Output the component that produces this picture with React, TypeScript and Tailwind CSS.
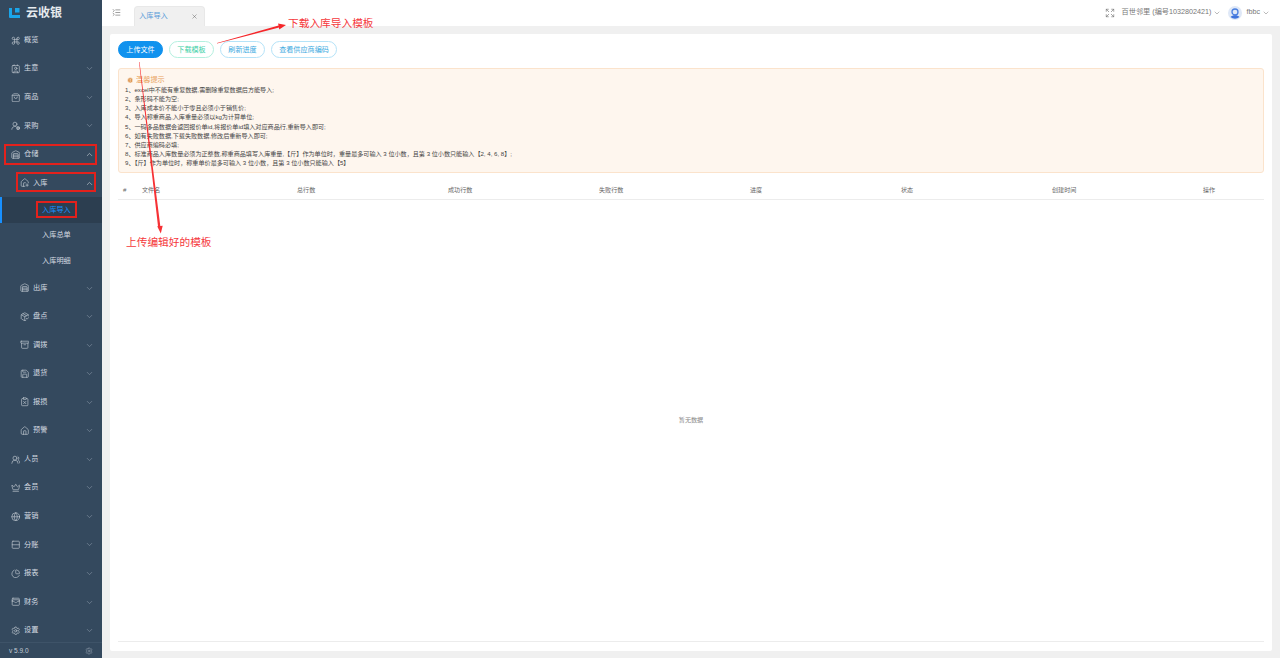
import React from "react";
import {
  ChevronDown,
  ChevronUp,
  Command,
  Contact,
  ShoppingBag,
  UserRoundCog,
  Warehouse,
  House,
  PackageCheck,
  Save,
  ClipboardX,
  HousePlus,
  UsersRound,
  Crown,
  Globe,
  Rows2,
  ChartPie,
  WalletCards,
  Settings,
  X,
  Expand,
  ListCollapse,
  CircleAlert,
  Archive,
} from "lucide-react";

type Item = { label: string; icon: React.ElementType; arrow?: boolean };

const topItems: Item[] = [
  { label: "概览", icon: Command },
  { label: "生意", icon: Contact, arrow: true },
  { label: "商品", icon: ShoppingBag, arrow: true },
  { label: "采购", icon: UserRoundCog, arrow: true },
];

const stockItems: Item[] = [
  { label: "出库", icon: Warehouse, arrow: true },
  { label: "盘点", icon: PackageCheck, arrow: true },
  { label: "调拨", icon: Archive, arrow: true },
  { label: "退货", icon: Save, arrow: true },
  { label: "报损", icon: ClipboardX, arrow: true },
  { label: "预警", icon: House, arrow: true },
];

const bottomItems: Item[] = [
  { label: "人员", icon: UsersRound, arrow: true },
  { label: "会员", icon: Crown, arrow: true },
  { label: "营销", icon: Globe, arrow: true },
  { label: "分账", icon: Rows2, arrow: true },
  { label: "报表", icon: ChartPie, arrow: true },
  { label: "财务", icon: WalletCards, arrow: true },
  { label: "设置", icon: Settings, arrow: true },
];

const tips = [
  "1、excel中不能有重复数据,需删除重复数据后方能导入;",
  "2、条形码不能为空;",
  "3、入库成本价不能小于零且必须小于销售价;",
  "4、导入称重商品,入库重量必须以kg为计算单位;",
  "5、一码多品数据会返回报价单id,将报价单id填入对应商品行,重新导入即可;",
  "6、如有失败数据,下载失败数据,修改后重新导入即可;",
  "7、供应商编码必填;",
  "8、标准商品入库数量必须为正整数,称重商品填写入库重量,【斤】作为单位时,重量最多可输入 3 位小数,且第 3 位小数只能输入【2, 4, 6, 8】;",
  "9、【斤】作为单位时,称重单价最多可输入 3 位小数,且第 3 位小数只能输入【5】",
].map((t) => t.replace("单位时,", "单位时，").replace("位小数,", "位小数，"));

const columns = ["#", "文件名", "总行数", "成功行数", "失败行数", "进度", "状态", "创建时间", "操作"];

function MenuRow({ item, sub = false }: { item: Item; sub?: boolean }) {
  const Icon = item.icon;
  return (
    <div className={`flex h-[28.56px] items-center pr-[8px] text-[7.2px] text-[#d5dbe1] ${sub ? "pl-[19.5px]" : "pl-[10.5px]"}`}>
      <Icon className="mr-[4px] h-[9.5px] w-[9.5px] shrink-0 text-[#c5cdd5]" strokeWidth={1.6} />
      <span className="flex-1">{item.label}</span>
      {item.arrow && <ChevronDown className="h-[9px] w-[9px] text-[#8d9bab]" strokeWidth={1.5} />}
    </div>
  );
}

function PillButton({ label, className }: { label: string; className: string }) {
  return (
    <button className={`flex h-[17px] items-center justify-center rounded-full border pt-[1px] text-[7.1px] ${className}`}>
      {label}
    </button>
  );
}

export default function App() {
  return (
    <div className="relative flex h-[658px] w-[1280px] overflow-hidden bg-[#f0f0f0] font-['Liberation_Sans','Noto_Sans_CJK_SC',sans-serif]">
      {/* sidebar */}
      <aside className="flex h-full w-[102px] shrink-0 flex-col bg-[#34495e]">
        <div className="flex h-[26px] shrink-0 items-center pl-[9px]">
          <svg width="12" height="12" viewBox="0 0 12 12" className="mr-[5px]">
            <path d="M0 1h3v7h8v3H1a1 1 0 0 1-1-1z" fill="#1aa5ea" />
            <rect x="6" y="1" width="4.5" height="4.5" fill="#1aa5ea" />
          </svg>
          <span className="text-[12px] font-bold text-[#e6ebef]">云收银</span>
        </div>
        <nav className="flex-1 overflow-hidden">
          {topItems.map((it) => (
            <MenuRow key={it.label} item={it} />
          ))}
          <div className="relative flex h-[28.56px] items-center pl-[10.5px] pr-[8px] text-[7.2px] text-[#d5dbe1]">
            <Warehouse className="mr-[4px] h-[9.5px] w-[9.5px] text-[#c5cdd5]" strokeWidth={1.6} />
            <span className="flex-1">仓储</span>
            <ChevronUp className="h-[9px] w-[9px]" strokeWidth={1.5} />
            <div className="absolute left-[4px] top-[3.5px] h-[21px] w-[93px] border-2 border-[#e3211c]" />
          </div>
          <div className="relative flex h-[28.56px] items-center pl-[19.5px] pr-[8px] text-[7.2px] text-[#d5dbe1]">
            <HousePlus className="mr-[4px] h-[9.5px] w-[9.5px] text-[#c5cdd5]" strokeWidth={1.6} />
            <span className="flex-1">入库</span>
            <ChevronUp className="h-[9px] w-[9px]" strokeWidth={1.5} />
            <div className="absolute left-[16px] top-[3.5px] h-[20px] w-[80px] border-2 border-[#e3211c]" />
          </div>
          <div className="bg-[#2c3e50]">
            <div className="relative flex h-[25.5px] items-center border-l-2 border-[#1890ff] pl-[40px] text-[7.2px] text-[#1890ff]">
              入库导入
              <div className="absolute left-[34px] top-[4px] h-[17px] w-[41px] border-2 border-[#e3211c]" />
            </div>
          </div>
          <div className="flex h-[25.5px] items-center pl-[42px] text-[7.2px] text-[#d5dbe1]">入库总单</div>
          <div className="flex h-[25.5px] items-center pl-[42px] text-[7.2px] text-[#d5dbe1]">入库明细</div>
          {stockItems.map((it) => (
            <MenuRow key={it.label} item={it} sub />
          ))}
          {bottomItems.map((it) => (
            <MenuRow key={it.label} item={it} />
          ))}
        </nav>
        <div className="flex h-[16px] shrink-0 items-center justify-between border-t border-[#3e5368] pl-[9px] pr-[9px] text-[6.5px] text-[#c3ccd5]">
          <span>v 5.9.0</span>
          <Settings className="h-[8px] w-[8px] text-[#9aa7b4]" strokeWidth={1.5} />
        </div>
      </aside>

      {/* main */}
      <div className="flex min-w-0 flex-1 flex-col">
        <header className="flex h-[26px] shrink-0 items-end bg-white">
          <div className="flex h-full w-[31px] items-center justify-center pb-[1px] pr-[2px] text-[#555]">
            <ListCollapse className="h-[9px] w-[9px]" strokeWidth={1.5} />
          </div>
          <div className="ml-[1px] flex h-[20px] w-[71px] items-center justify-between rounded-t-[4px] border border-b-0 border-[#e8e8e8] bg-[#f0f0f0] pl-[4px] pr-[6px] text-[7.2px] text-[#5a9bd8]">
            入库导入
            <X className="h-[7px] w-[7px] text-[#555]" strokeWidth={1.5} />
          </div>
          <div className="ml-auto flex h-full items-center pb-[1px] pr-[10px] text-[7.2px] text-[#777]">
            <Expand className="mr-[7px] h-[10px] w-[10px]" strokeWidth={1.6} />
            <span>百世邻里 (编号1032802421)</span>
            <ChevronDown className="ml-[2px] mr-[7px] h-[8px] w-[8px]" strokeWidth={1.5} />
            <svg width="14" height="14" viewBox="0 0 14 14" className="mr-[4px]">
              <circle cx="7" cy="7" r="7" fill="#dfe8f7" />
              <circle cx="7" cy="6" r="3" fill="none" stroke="#4a7fe0" strokeWidth="1.3" />
              <path d="M2.5 11c2-2.2 7-2.2 9 0a6.5 6.5 0 0 1-9 0z" fill="#3f74dc" />
            </svg>
            <span>fbbc</span>
            <ChevronDown className="ml-[2px] h-[8px] w-[8px]" strokeWidth={1.5} />
          </div>
        </header>

        <main className="flex-1 px-[8px] pb-[7px] pt-[8px]">
          <section className="flex h-full flex-col rounded-[2px] bg-white px-[8px] pb-[9px] pt-[7px]">
            <div className="flex gap-[6px]">
              <PillButton label="上传文件" className="w-[45px] border-[#1092ee] bg-[#1092ee] text-white" />
              <PillButton label="下载模板" className="w-[45px] border-[#b4f0df] text-[#3ecfa6]" />
              <PillButton label="刷新进度" className="w-[45px] border-[#b5e3f8] text-[#3aa9e0]" />
              <PillButton label="查看供应商编码" className="w-[66px] border-[#b5e3f8] text-[#3aa9e0]" />
            </div>

            <div className="mt-[10px] h-[105px] rounded-[3px] border border-[#fbe3cc] bg-[#fef6ee] px-[6px] pt-[6.5px]">
              <div className="flex h-[9px] items-center text-[7.2px] text-[#e8a15c]">
                <CircleAlert className="ml-[1.5px] mr-[3px] h-[6.5px] w-[6.5px] fill-[#e09a55] text-white" strokeWidth={2} />
                温馨提示
              </div>
              <div className="pt-[0.5px] text-[6.1px] leading-[9.15px] text-[#444]">
                {tips.map((t) => (
                  <div key={t}>{t}</div>
                ))}
              </div>
            </div>

            <div className="mt-[7px] grid h-[20px] grid-cols-[19px_155px_151px_151px_151px_151px_151px_151px_1fr] items-center border-b border-[#ececec] pl-[5px] text-[6.1px] text-[#666]">
              {columns.map((c) => (
                <span key={c}>{c}</span>
              ))}
            </div>

            <div className="flex flex-1 items-center justify-center border-b border-[#ececec] pb-[2px] text-[6.1px] text-[#888]">
              暂无数据
            </div>
          </section>
        </main>
      </div>

      {/* red annotations drawn over the screenshot */}
      <svg className="pointer-events-none absolute left-0 top-0" width="1280" height="658" viewBox="0 0 1280 658">
        <polygon points="217,43 217,43.6 279,27.6 279.2,29.6 286,25 278,23.6 278.6,25.6" fill="#f5262a" />
        <polygon points="139,62 139.5,62 160.3,226 162.7,225.7 160.8,233.5 157.2,226.3 158,226.2" fill="#f5262a" opacity="0.95" />
      </svg>
      <div className="absolute left-[288px] top-[16px] text-[10.7px] leading-[14px] text-[#f5383c]">下载入库导入模板</div>
      <div className="absolute left-[126px] top-[235px] text-[10.7px] leading-[14px] text-[#f5383c]">上传编辑好的模板</div>
    </div>
  );
}
